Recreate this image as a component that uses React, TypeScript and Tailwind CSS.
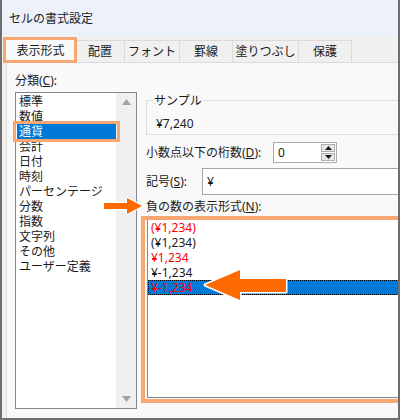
import React from "react";

const categories = [
  "標準",
  "数値",
  "通貨",
  "会計",
  "日付",
  "時刻",
  "パーセンテージ",
  "分数",
  "指数",
  "文字列",
  "その他",
  "ユーザー定義",
];

const negatives = [
  { t: "(¥1,234)", red: true, sel: false },
  { t: "(¥1,234)", red: false, sel: false },
  { t: "¥1,234", red: true, sel: false },
  { t: "¥-1,234", red: false, sel: false },
  { t: "¥-1,234", red: true, sel: true },
];

const tabs = [
  { label: "配置", w: "w-[49px]" },
  { label: "フォント", w: "w-[55px]" },
  { label: "罫線", w: "w-[53px]" },
  { label: "塗りつぶし", w: "w-[66px]" },
  { label: "保護", w: "w-[53px]" },
];

export default function App() {
  return (
    <div className="relative w-[400px] h-[420px] overflow-hidden border-l-2 border-r-2 border-b-2 border-[#6e6e6e] bg-[#f0f0f0] text-[12px] leading-[15px] text-[#1a1a1a] font-['Noto_Sans','Noto_Sans_CJK_JP',sans-serif]">
      {/* Title bar */}
      <div className="h-[36px] bg-[#edf1fa] pl-[7px] flex items-center text-[12px] text-[#1a1a1a]">
        セルの書式設定
      </div>

      {/* Tabs */}
      <div className="h-[26px] flex items-end pl-[3px] bg-[#f0f0f0]">
        <div className="relative z-10 -mb-px w-[71px] h-[26px] bg-[#f9f9f9] border-x border-t border-[#dadada] flex items-center justify-center">
          表示形式
        </div>
        {tabs.map((t) => (
          <div
            key={t.label}
            className={`${t.w} h-[22px] border-t border-r border-[#dadada] bg-[#f0f0f0] flex items-center justify-center`}
          >
            {t.label}
          </div>
        ))}
      </div>

      {/* Panel */}
      <div className="ml-[4px] h-[356px] bg-[#f9f9f9] border-t border-l border-[#dadada] flex pl-[8px]">
        {/* Left column */}
        <div className="w-[122px] pt-[10px] flex flex-col">
          <div className="h-[15px]">
            分類(<span className="underline">C</span>):
          </div>
          <div className="mt-[4px] h-[317px] border border-[#828790] bg-white flex">
            <div className="w-[100px] pl-px pt-px flex flex-col">
              {categories.map((c) => (
                <div
                  key={c}
                  className={
                    c === "通貨"
                      ? "h-[15px] px-[2px] bg-[#0078d7] text-white"
                      : "h-[15px] px-[2px]"
                  }
                >
                  {c}
                </div>
              ))}
            </div>
            <div className="w-[20px] bg-[#f0f0f0] flex flex-col justify-between items-center py-[6px]">
              <svg width="9" height="6" viewBox="0 0 9 6">
                <polygon points="0,6 4.5,0 9,6" fill="#a3a3a3" />
              </svg>
              <svg width="9" height="6" viewBox="0 0 9 6">
                <polygon points="0,0 9,0 4.5,6" fill="#a3a3a3" />
              </svg>
            </div>
          </div>
        </div>

        {/* Right column */}
        <div className="ml-[9px] w-[300px] shrink-0 pt-[37px] flex flex-col">
          {/* Sample group */}
          <div className="relative h-[35px] border border-[#dcdcdc]">
            <span className="absolute left-[6px] -top-[8px] px-px bg-[#f9f9f9]">サンプル</span>
            <div className="pl-[9px] pt-[15px]">¥7,240</div>
          </div>

          {/* Decimal places */}
          <div className="mt-[7px] h-[21px] flex items-center">
            <div className="w-[127px]">
              小数点以下の桁数(<span className="underline">D</span>):
            </div>
            <div className="w-[64px] h-[21px] border border-[#acacac] bg-white flex">
              <div className="flex-1 pl-[4px] flex items-center">0</div>
              <div className="w-[16px] flex flex-col p-px gap-px">
                <div className="flex-1 bg-[#e6e6e6] border border-[#adadad] flex items-center justify-center">
                  <svg width="7" height="4" viewBox="0 0 7 4">
                    <polygon points="0,4 3.5,0 7,4" fill="#1a1a1a" />
                  </svg>
                </div>
                <div className="flex-1 bg-[#e6e6e6] border border-[#adadad] flex items-center justify-center">
                  <svg width="7" height="4" viewBox="0 0 7 4">
                    <polygon points="0,0 7,0 3.5,4" fill="#1a1a1a" />
                  </svg>
                </div>
              </div>
            </div>
          </div>

          {/* Symbol */}
          <div className="mt-[5px] h-[27px] flex items-center">
            <div className="w-[56px]">
              記号(<span className="underline">S</span>):
            </div>
            <div className="flex-1 h-[27px] border border-[#a5a5a5] bg-white pl-[4px] flex items-center">
              ¥
            </div>
          </div>

          {/* Negative numbers */}
          <div className="mt-[4px] h-[15px]">
            負の数の表示形式(<span className="underline">N</span>):
          </div>
          <div className="mt-[5px] ml-px h-[179px] border border-[#828790] bg-white flex flex-col">
            {negatives.map((n, i) => (
              <div
                key={i}
                className={
                  n.sel
                    ? "h-[15px] px-[3px] bg-[#0078d7] text-[#ff0000] outline outline-1 outline-dotted outline-black -outline-offset-1"
                    : n.red
                    ? "h-[15px] px-[3px] text-[#ff0000]"
                    : "h-[15px] px-[3px] text-[#1a1a1a]"
                }
              >
                {n.t}
              </div>
            ))}
          </div>
        </div>
      </div>

      {/* Annotation overlays */}
      <div className="absolute left-[1px] top-[37px] w-[74px] h-[26px] border-[3px] border-[#f8a772] z-20" />
      <div className="absolute left-[11px] top-[121px] w-[107px] h-[21px] border-[3px] border-[#f8a772] z-20" />
      <div className="absolute left-[139px] top-[216px] w-[262px] h-[187px] border-[4px] border-[#f8a772] z-20" />

      <svg
        className="absolute left-[100px] top-[195px] z-30"
        width="42"
        height="22"
        viewBox="0 0 42 22"
      >
        <polygon
          points="2,8 25,8 25,3 40,11 25,19 25,14 2,14"
          fill="#ff6a00"
          stroke="#ffffff"
          strokeWidth="2.5"
          strokeLinejoin="round"
          paintOrder="stroke"
        />
      </svg>

      <svg
        className="absolute left-[198px] top-[266px] z-30"
        width="92"
        height="40"
        viewBox="0 0 92 40"
      >
        <polygon
          points="5,19 40,4 40,13 86,13 86,26 40,26 40,34"
          fill="#ff6a00"
          stroke="#ffffff"
          strokeWidth="3"
          strokeLinejoin="round"
          paintOrder="stroke"
        />
      </svg>
    </div>
  );
}
